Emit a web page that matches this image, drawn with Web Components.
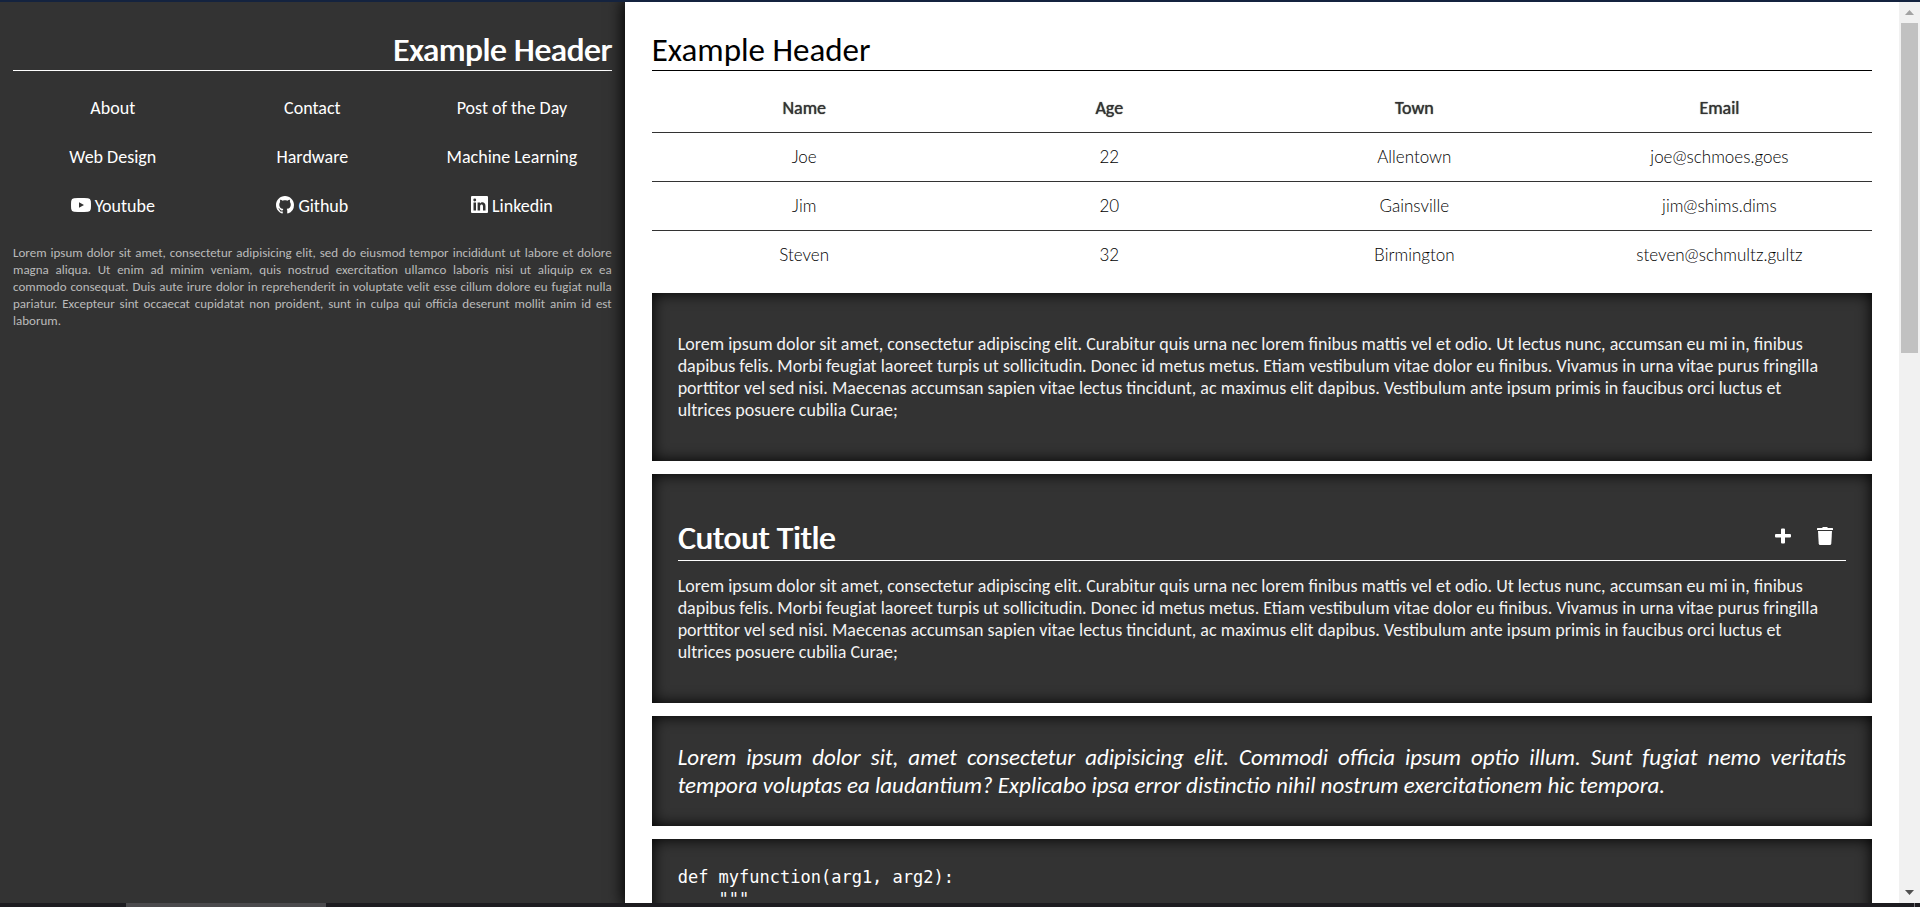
<!DOCTYPE html>
<html lang="en">
<head>
<meta charset="utf-8">
<title>Example Header</title>
<style>
  html, body { margin: 0; height: 100%; }
  body { font: 18px/22px Calibri, Carlito, Lato, sans-serif; background: #fff; color: #333; }
</style>
</head>
<body>
<app-window>
  <side-panel slot="side" heading="Example Header">
    <nav-link>About</nav-link>
    <nav-link>Contact</nav-link>
    <nav-link>Post of the Day</nav-link>
    <nav-link>Web Design</nav-link>
    <nav-link>Hardware</nav-link>
    <nav-link>Machine Learning</nav-link>
    <nav-link icon="youtube">Youtube</nav-link>
    <nav-link icon="github">Github</nav-link>
    <nav-link icon="linkedin">Linkedin</nav-link>
    <span slot="footer">Lorem ipsum dolor sit amet, consectetur adipisicing elit, sed do eiusmod tempor incididunt ut labore et dolore magna aliqua. Ut enim ad minim veniam, quis nostrud exercitation ullamco laboris nisi ut aliquip ex ea commodo&nbsp;consequat. Duis aute irure dolor in reprehenderit in voluptate velit esse cillum dolore eu fugiat nulla pariatur. Excepteur sint occaecat cupidatat non proident, sunt in culpa qui officia deserunt mollit anim id est laborum.</span>
  </side-panel>
  <section-title>Example Header</section-title>
  <people-table></people-table>
  <cutout-box>Lorem ipsum dolor sit amet, consectetur adipiscing elit. Curabitur quis urna nec lorem finibus mattis vel et odio. Ut lectus nunc, accumsan eu mi in, finibus dapibus felis. Morbi feugiat laoreet turpis ut sollicitudin. Donec id metus metus. Etiam vestibulum vitae dolor eu finibus. Vivamus in urna vitae purus fringilla porttitor vel sed nisi. Maecenas accumsan sapien vitae lectus tincidunt, ac maximus elit dapibus. Vestibulum ante ipsum primis in faucibus orci luctus et ultrices&nbsp;posuere cubilia Curae;</cutout-box>
  <cutout-box heading="Cutout Title">Lorem ipsum dolor sit amet, consectetur adipiscing elit. Curabitur quis urna nec lorem finibus mattis vel et odio. Ut lectus nunc, accumsan eu mi in, finibus dapibus felis. Morbi feugiat laoreet turpis ut sollicitudin. Donec id metus metus. Etiam vestibulum vitae dolor eu finibus. Vivamus in urna vitae purus fringilla porttitor vel sed nisi. Maecenas accumsan sapien vitae lectus tincidunt, ac maximus elit dapibus. Vestibulum ante ipsum primis in faucibus orci luctus et ultrices&nbsp;posuere cubilia Curae;</cutout-box>
  <cutout-box variant="quote">Lorem ipsum dolor sit, amet consectetur adipisicing elit. Commodi officia ipsum optio illum. Sunt fugiat nemo veritatis tempora voluptas ea laudantium? Explicabo ipsa error distinctio nihil nostrum exercitationem hic tempora.</cutout-box>
  <cutout-box variant="code">def myfunction(arg1, arg2):
    """</cutout-box>
</app-window>
<script>
const define = (name, render) => customElements.define(name, class extends HTMLElement {
  constructor() {
    super();
    this.attachShadow({ mode: 'open' }).innerHTML = render(this);
  }
});

const icons = {
  youtube: '<svg width="20" height="14" viewBox="0 0 20 14"><path fill="currentColor" fill-rule="evenodd" d="M3 .2Q10-.3 17 .2Q19.5.4 19.8 3Q20.2 7 19.8 11Q19.5 13.600 17 13.800Q10 14.300 3 13.800Q.5 13.600.2 11Q-.2 7 .2 3Q.5.400 3 .2ZM8 4.200V9.800L13 7Z"/></svg>',
  github: '<svg width="18" height="18" viewBox="0 0 16 16"><path fill="currentColor" d="M8 0C3.580 0 0 3.580 0 8c0 3.540 2.290 6.530 5.470 7.590.4.070.55-.17.55-.38 0-.19-.01-.82-.01-1.490-2.010.37-2.530-.49-2.690-.94-.09-.23-.48-.94-.82-1.130-.28-.15-.68-.52-.01-.53.63-.01 1.080.58 1.230.82.72 1.210 1.870.87 2.330.66.070-.52.280-.87.510-1.070-1.780-.2-3.640-.89-3.640-3.950 0-.87.310-1.590.820-2.150-.080-.2-.36-1.020.080-2.120 0 0 .67-.21 2.200.820.640-.18 1.320-.27 2-.27s1.360.090 2 .27c1.530-1.040 2.200-.82 2.200-.82.440 1.100.160 1.920.080 2.120.510.560.820 1.270.820 2.150 0 3.070-1.870 3.750-3.650 3.950.290.250.540.730.540 1.480 0 1.070-.01 1.930-.01 2.200 0 .21.150.460.550.380A8.010 8.010 0 0 0 16 8c0-4.420-3.580-8-8-8Z"/></svg>',
  linkedin: '<svg width="17" height="17" viewBox="0 0 17 17"><path fill="currentColor" fill-rule="evenodd" d="M1 0H16Q17 0 17 1V16Q17 17 16 17H1Q0 17 0 16V1Q0 0 1 0ZM2.500 6.500V14.500H5V6.500ZM3.750 2.500A1.450 1.450 0 1 0 3.750 5.400A1.450 1.450 0 0 0 3.750 2.500ZM6.600 6.500V14.500H9.100V10.500C9.100 7.900 12 8 12 10.400V14.500H14.500V10C14.500 5.900 10.500 5.500 9 7.600V6.500Z"/></svg>',
  plus: '<svg width="16" height="16" viewBox="0 0 16 16"><path fill="currentColor" d="M6 1.500Q6 .5 7 .5H9Q10 .5 10 1.500V6H15Q16 6 16 7V8.500Q16 9.500 15 9.500H10V14.500Q10 15.500 9 15.500H7Q6 15.500 6 14.500V9.500H1Q0 9.500 0 8.500V7Q0 6 1 6H6Z"/></svg>',
  trash: '<svg width="16" height="18" viewBox="0 0 16 18"><path fill="currentColor" d="M0 1.600Q0 1 .6 1H5L5.400.4Q5.600 0 6.100 0H9.900Q10.400 0 10.600.4L11 1H15.400Q16 1 16 1.600V3H0Z"/><path fill="currentColor" d="M1 4H15L14.300 16.500Q14.200 18 12.700 18H3.300Q1.800 18 1.700 16.500Z"/></svg>'
};

define('app-window', () => `
  <style>
    :host { display: flex; flex-direction: column; height: 100vh; overflow: hidden; }
    .top { flex: none; height: 2px; background: #14233f; }
    .view { flex: 1; min-height: 0; display: grid; grid-template-columns: minmax(0, 1fr) 21px; }
    .page { min-height: 0; overflow: hidden; display: grid; grid-template-columns: minmax(0, 25fr) minmax(0, 51fr); }
    main { min-height: 0; overflow: hidden; padding: 28px 27px 0; display: flex; flex-direction: column;
      background: #fff; box-shadow: 0 0 15px 2px #000; z-index: 1; }
    .bottom { flex: none; height: 4px; background: #1d1c20; display: flex; justify-content: space-between; }
    .bottom i { width: 200px; margin-left: 126px; background: #4b4a4d; }
    .bottom b { width: 1px; margin-right: 5px; background: #77767a; }
  </style>
  <div class="top"></div>
  <div class="view">
    <div class="page"><slot name="side"></slot><main><slot></slot></main></div>
    <scroll-track></scroll-track>
  </div>
  <div class="bottom"><i></i><b></b></div>`);

define('scroll-track', () => `
  <style>
    :host { display: flex; flex-direction: column; align-items: center; background: #f1f1f1; }
    svg { flex: none; margin: 8px 0; fill: #a3a3a3; }
    svg.down { fill: #505050; }
    .thumb { width: 17px; height: 330px; background: #c1c1c1; }
    .rest { flex: 1; }
  </style>
  <svg width="9" height="5" viewBox="0 0 9 5"><path d="M0 5L4.500 0L9 5Z"/></svg>
  <div class="thumb"></div><div class="rest"></div>
  <svg class="down" width="9" height="5" viewBox="0 0 9 5"><path d="M0 0H9L4.500 5Z"/></svg>`);

define('section-title', () => `
  <style>
    :host { display: block; color: #000; border-bottom: 1px solid; }
    h1 { margin: 0; font-size: 33px; line-height: 40px; font-weight: 400; }
  </style>
  <h1><slot></slot></h1>`);

define('side-panel', el => `
  <style>
    :host { display: block; box-sizing: border-box; padding: 28px 13px; background: #333; color: #fff; }
    section-title { color: #fff; text-align: right; text-shadow: 1px 0; }
    nav { display: grid; grid-template-columns: repeat(3, 1fr); padding: 13px 0; }
    footer { font-size: 13px; line-height: 17px; color: #bbb; text-align: justify; }
  </style>
  <section-title>${el.getAttribute('heading')}</section-title>
  <nav><slot></slot></nav>
  <footer><slot name="footer"></slot></footer>`);

define('nav-link', el => `
  <style>
    :host { display: block; text-align: center; }
    a { display: inline-flex; align-items: center; gap: 4px; padding: 13px; line-height: 23px; color: inherit; text-decoration: none; }
    svg { margin-top: -4px; }
  </style>
  <a href="#">${icons[el.getAttribute('icon')] || ''}<span><slot></slot></span></a>`);

define('people-table', () => {
  const head = ['Name', 'Age', 'Town', 'Email'];
  const rows = [
    ['Joe', '22', 'Allentown', 'joe@schmoes.goes'],
    ['Jim', '20', 'Gainsville', 'jim@shims.dims'],
    ['Steven', '32', 'Birmington', 'steven@schmultz.gultz']
  ];
  return `
  <style>
    :host { display: block; padding: 13px 0 14px; }
    table { width: 100%; table-layout: fixed; border-collapse: collapse; text-align: center; }
    th, td { height: 48px; padding: 0; border-bottom: 1px solid #333; }
    th { font-weight: 400; text-shadow: 0 0 1px; }
    td { font-family: Lato, sans-serif; font-size: 17px; font-weight: 300; color: #000; }
    tbody tr:last-child td { border-bottom: 0; }
  </style>
  <table>
    <thead><tr>${head.map(h => `<th scope="col">${h}</th>`).join('')}</tr></thead>
    <tbody>${rows.map(r => `<tr>${r.map(c => `<td>${c}</td>`).join('')}</tr>`).join('')}</tbody>
  </table>`;
});

define('cutout-box', el => {
  const title = el.getAttribute('heading');
  const tag = el.getAttribute('variant') === 'code' ? 'pre' : 'p';
  return `
  <style>
    :host { display: block; flex: none; margin-bottom: 13px; padding: 40px 26px; background: #333; color: #fff;
      box-shadow: inset 0 0 15px #000; }
    :host([variant]) { padding: 27px 26px; }
    header { display: flex; align-items: center; border-bottom: 1px solid #fff; margin-bottom: 14px; padding: 4px 0 2px; }
    h2 { flex: 1; margin: 0; font-size: 33px; line-height: 40px; font-weight: 400; text-shadow: 1px 0; }
    button { display: flex; margin: 0 13px 4px; padding: 0; border: 0; background: none; color: inherit; }
    p { margin: 0; }
    :host(:not([variant])) p { color: #f2f2f2; }
    :host([variant=quote]) p { font-size: 23px; line-height: 28px; font-style: italic; text-align: justify; }
    pre { margin: 0; font: 17px/22px "DejaVu Sans Mono", monospace; }
  </style>
  ${title ? `<header><h2>${title}</h2><button aria-label="Add">${icons.plus}</button><button aria-label="Delete">${icons.trash}</button></header>` : ''}
  <${tag}><slot></slot></${tag}>`;
});
</script>
</body>
</html>
